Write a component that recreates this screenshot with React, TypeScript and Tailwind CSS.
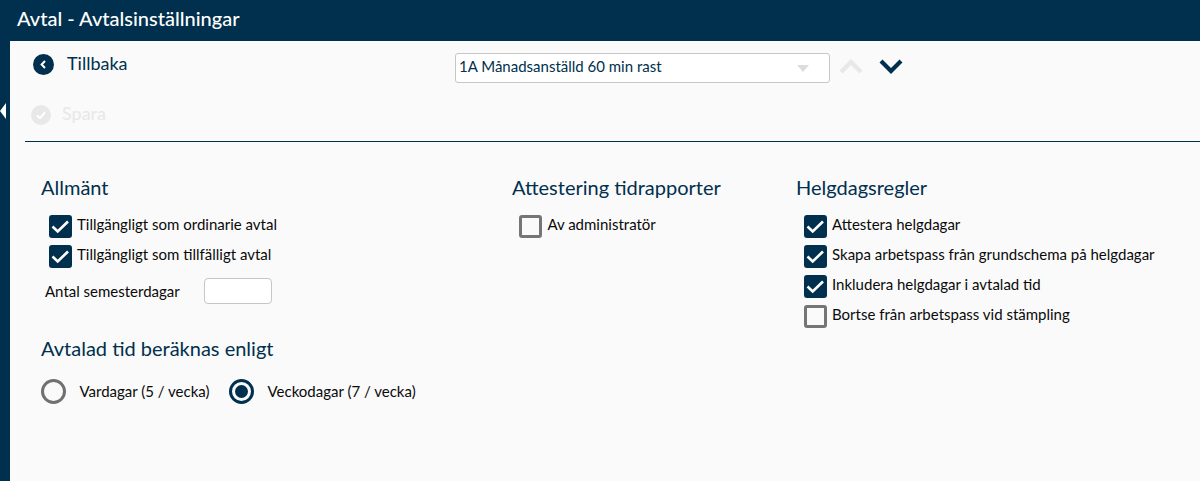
import React from "react";

function Check({ checked, label }: { checked: boolean; label: string }) {
  return (
    <div className="flex items-start h-[30px]">
      {checked ? (
        <span className="w-[23px] h-[23px] rounded-[3px] bg-[#00304d] shrink-0">
          <svg width="23" height="23" viewBox="0 0 23 23" fill="none">
            <path d="M3.5 11.5 L8.7 16.5 L19 6.5" stroke="#fff" strokeWidth="2.6" />
          </svg>
        </span>
      ) : (
        <span className="w-[23px] h-[23px] rounded-[3px] border-[3px] border-[#757575] bg-[#fafafa] shrink-0" />
      )}
      <span className="ml-[5px] text-[15px] leading-[20px] -mt-[1px] text-[#0a0a0a] whitespace-nowrap">{label}</span>
    </div>
  );
}

function Radio({ checked, label }: { checked: boolean; label: string }) {
  return (
    <div className="flex items-center">
      <span
        className={
          checked
            ? "w-[25px] h-[25px] rounded-full border-[3px] border-[#00304d] flex items-center justify-center"
            : "w-[25px] h-[25px] rounded-full border-[3px] border-[#707070]"
        }
      >
        {checked && <span className="w-[13px] h-[13px] rounded-full bg-[#00304d]" />}
      </span>
      <span className="ml-[13.5px] -mt-[2px] text-[15px] leading-[20px] text-[#0a0a0a] whitespace-nowrap">{label}</span>
    </div>
  );
}

export default function App() {
  return (
    <div className="w-[1200px] h-[481px] overflow-hidden bg-[#fafafa] font-['Lato',sans-serif]">
      <header className="h-[41px] bg-[#00304d] flex items-center pl-[17px] pb-[5px] text-white text-[20px] font-medium">
        Avtal - Avtalsinställningar
      </header>
      <div className="flex h-[440px]">
        <aside className="relative w-[10px] bg-[#00304d]">
          <span className="absolute left-0 top-[62px] w-0 h-0 border-y-[8px] border-y-transparent border-r-[6px] border-r-white" />
        </aside>
        <main className="flex-1 pl-[15px]">
          <div className="h-[49px] flex items-start">
            <div className="flex items-center pt-[13px] pl-[8px] w-[430px]">
              <span className="w-[21px] h-[21px] rounded-full bg-[#00304d] flex items-center justify-center">
                <svg width="11" height="11" viewBox="0 0 11 11" fill="none">
                  <path d="M7 2 L3.6 5.5 L7 9" stroke="#fff" strokeWidth="2" />
                </svg>
              </span>
              <span className="ml-[13px] text-[18px] leading-[20px] -mt-[4px] text-[#00304d]">Tillbaka</span>
            </div>
            <div className="mt-[12px] w-[375px] h-[30px] bg-white border border-[#c6c6c6] rounded-[3px] flex items-center pl-[3px] pr-[20px] justify-between">
              <span className="text-[15px] text-[#00304d] whitespace-nowrap -mt-[4px]">1A Månadsanställd 60 min rast</span>
              <svg width="12" height="7" viewBox="0 0 12 7"><path d="M0 0 H12 L6 7 Z" fill="#dcdcdc" /></svg>
            </div>
            <svg className="ml-[9px] mt-[17px]" width="24" height="16" viewBox="0 0 24 16" fill="none">
              <path d="M2 14 L12 4 L22 14" stroke="#e8e8e8" strokeWidth="4.4" />
            </svg>
            <svg className="ml-[16px] mt-[17px]" width="24" height="16" viewBox="0 0 24 16" fill="none">
              <path d="M2 3 L12 13 L22 3" stroke="#00304d" strokeWidth="4.2" />
            </svg>
          </div>
          <div className="h-[52px] border-b border-[#00304d] flex items-start pl-[6px] pt-[15px]">
            <span className="w-[20px] h-[20px] rounded-full bg-[#e8e8e8] flex items-center justify-center">
              <svg width="12" height="12" viewBox="0 0 12 12" fill="none">
                <path d="M2 6.5 L5 9 L10 3.5" stroke="#fff" strokeWidth="2" />
              </svg>
            </span>
            <span className="ml-[11px] text-[18px] leading-[20px] -mt-[2px] text-[#e8e8e8]">Spara</span>
          </div>
          <div className="grid grid-cols-[471px_284px_1fr] pl-[16px] pt-[33px]">
            <section>
              <h2 className="text-[20px] leading-[24px] text-[#00304d]">Allmänt</h2>
              <div className="pl-[8px] mt-[16px]">
                <Check checked label="Tillgängligt som ordinarie avtal" />
                <Check checked label="Tillgängligt som tillfälligt avtal" />
              </div>
              <div className="flex items-center pl-[4px] h-[26px] mt-[3px]">
                <span className="text-[15px] text-[#0a0a0a] w-[159px] whitespace-nowrap">Antal semesterdagar</span>
                <span className="w-[68px] h-[26px] bg-white border border-[#c6c6c6] rounded-[4px]" />
              </div>
              <h2 className="mt-[32px] text-[20px] leading-[24px] text-[#00304d]">Avtalad tid beräknas enligt</h2>
              <div className="flex mt-[19px] gap-[19.5px]">
                <Radio checked={false} label="Vardagar (5 / vecka)" />
                <Radio checked label="Veckodagar (7 / vecka)" />
              </div>
            </section>
            <section>
              <h2 className="text-[20px] leading-[24px] text-[#00304d]">Attestering tidrapporter</h2>
              <div className="pl-[7.4px] mt-[16px]">
                <Check checked={false} label="Av administratör" />
              </div>
            </section>
            <section>
              <h2 className="text-[20px] leading-[24px] text-[#00304d]">Helgdagsregler</h2>
              <div className="pl-[8px] mt-[16px]">
                <Check checked label="Attestera helgdagar" />
                <Check checked label="Skapa arbetspass från grundschema på helgdagar" />
                <Check checked label="Inkludera helgdagar i avtalad tid" />
                <Check checked={false} label="Bortse från arbetspass vid stämpling" />
              </div>
            </section>
          </div>
        </main>
      </div>
    </div>
  );
}
